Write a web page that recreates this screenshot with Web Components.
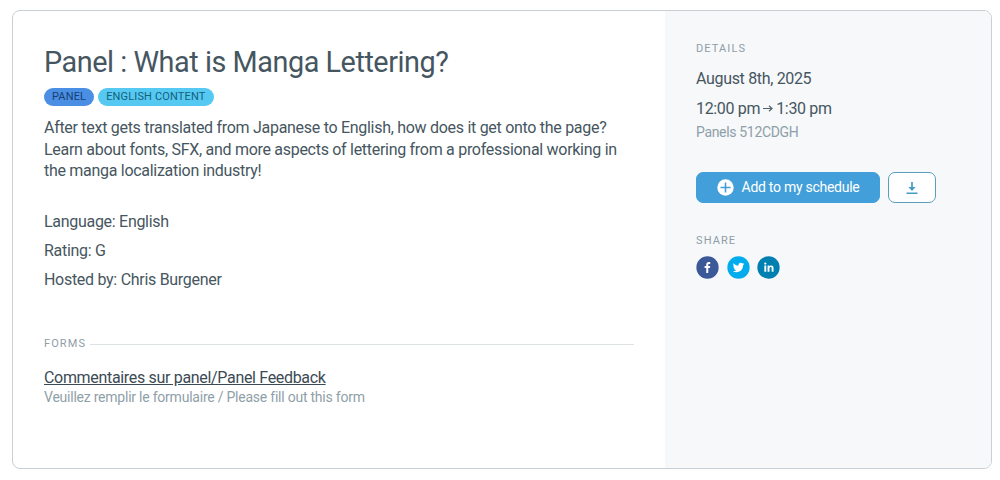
<!DOCTYPE html>
<html lang="en">
<head>
<meta charset="utf-8">
<title>Panel : What is Manga Lettering?</title>
<style>
  body {
    margin: 0;
    padding: 10px 8px 0 12px;
    background: #fff;
    font-family: Roboto, "Liberation Sans", sans-serif;
    font-size: 16px;
    letter-spacing: -.29px;
    color: #465660;
  }
</style>
</head>
<body>
<session-card>
  <session-heading>
    Panel : What is Manga Lettering?
    <session-tag slot="tags" style="--tag-bg: #4a8fe3; --tag-color: #173f75">PANEL</session-tag>
    <session-tag slot="tags" style="--tag-bg: #56c9f2; --tag-color: #14607c">ENGLISH CONTENT</session-tag>
  </session-heading>
  <session-description>
    After text gets translated from Japanese to English, how does it get onto the page? Learn about fonts, SFX, and more aspects of lettering from a professional working in the manga localization industry!
    <span slot="fact">Language: English</span>
    <span slot="fact">Rating: G</span>
    <span slot="fact">Hosted by: Chris Burgener</span>
  </session-description>
  <section-label line>FORMS</section-label>
  <form-link>
    Commentaires sur panel/Panel Feedback
    <span slot="note">Veuillez remplir le formulaire / Please fill out this form</span>
  </form-link>

  <section-label slot="aside">DETAILS</section-label>
  <session-time slot="aside" start="12:00 pm" end="1:30 pm">
    August 8th, 2025
    <span slot="place">Panels 512CDGH</span>
  </session-time>
  <schedule-actions slot="aside">Add to my schedule</schedule-actions>
  <section-label slot="aside">SHARE</section-label>
  <share-links slot="aside"></share-links>
</session-card>

<script>
class BaseElement extends HTMLElement {
    constructor() {
        super();
        this.shadowDOM = this.attachShadow({ mode: 'open' });
    }
    connectedCallback() {
        this.shadowDOM.innerHTML = this.render();
    }
}

class SessionCard extends BaseElement {
    render() {
        return `
        <style>
        :host {
            display: flex;
            box-sizing: border-box;
            height: 459px;
            border: 1px solid #c8d0d5;
            border-radius: 8px;
            overflow: hidden;
        }
        main {
            flex: 1;
            padding: 32px 31px 0;
        }
        aside {
            box-sizing: border-box;
            width: 326px;
            padding: 31px 31px 0;
            background: #f6f8fa;
        }
        </style>
        <main><slot></slot></main>
        <aside><slot name="aside"></slot></aside>`;
    }
}

class SessionHeading extends BaseElement {
    render() {
        return `
        <style>
        :host { display: block; }
        h1 {
            margin: 0;
            font-size: 28.8px;
            font-weight: 400;
            line-height: 38px;
            letter-spacing: -.45px;
            white-space: nowrap;
        }
        .tags {
            display: flex;
            gap: 4px;
            margin-top: 7px;
        }
        </style>
        <h1><slot></slot></h1>
        <div class="tags"><slot name="tags"></slot></div>`;
    }
}

class SessionTag extends BaseElement {
    render() {
        return `
        <style>
        :host {
            display: block;
            height: 18px;
            padding: 0 8px;
            border-radius: 9px;
            background: var(--tag-bg);
            color: var(--tag-color);
            font-size: 11px;
            line-height: 17px;
            letter-spacing: .15px;
            white-space: nowrap;
        }
        </style>
        <slot></slot>`;
    }
}

class SessionDescription extends BaseElement {
    render() {
        return `
        <style>
        :host { display: block; }
        p {
            margin: 11px 0 0;
            line-height: 21.6px;
        }
        .facts {
            display: flex;
            flex-direction: column;
            margin-top: 25px;
            line-height: 29.3px;
        }
        </style>
        <p><slot></slot></p>
        <div class="facts"><slot name="fact"></slot></div>`;
    }
}

class SectionLabel extends BaseElement {
    render() {
        return `
        <style>
        :host {
            display: flex;
            align-items: center;
            gap: 4px;
            color: #8f9da6;
            font-size: 11px;
            line-height: 14px;
            letter-spacing: 1.1px;
        }
        :host([line]) { margin-top: 42.5px; }
        :host([line])::after {
            content: "";
            flex: 1;
            height: 1px;
            background: #dce1e4;
        }
        </style>
        <slot></slot>`;
    }
}

class FormLink extends BaseElement {
    render() {
        return `
        <style>
        :host { display: block; margin-top: 16px; }
        a {
            display: block;
            color: #3b4a54;
            line-height: 22px;
            text-decoration: underline;
            letter-spacing: -.32px;
        }
        .note {
            margin-top: -1px;
            color: #8f9fa9;
            font-size: 14px;
            line-height: 18px;
            letter-spacing: -.23px;
        }
        </style>
        <a><slot></slot></a>
        <div class="note"><slot name="note"></slot></div>`;
    }
}

class SessionTime extends BaseElement {
    render() {
        return `
        <style>
        :host { display: block; margin-top: 8px; letter-spacing: -.33px; }
        .row {
            display: flex;
            align-items: center;
            gap: 3px;
            line-height: 29.5px;
        }
        .place {
            color: #8f9fa9;
            font-size: 14px;
            line-height: 18px;
        }
        </style>
        <div class="row"><slot></slot></div>
        <div class="row">
          <span>${this.getAttribute('start')}</span>
          <svg width="10" height="10" viewBox="0 0 10 10" fill="none" stroke="#53626c" stroke-width="1.2"><path d="M0 5.500h9M6 2.700l3 2.800-3 2.800"/></svg>
          <span>${this.getAttribute('end')}</span>
        </div>
        <div class="place"><slot name="place"></slot></div>`;
    }
}

class ScheduleActions extends BaseElement {
    render() {
        return `
        <style>
        :host {
            display: flex;
            gap: 8px;
            margin: 31px 0 31px;
        }
        button {
            display: flex;
            align-items: center;
            justify-content: center;
            box-sizing: border-box;
            height: 31px;
            margin: 0;
            padding: 0;
            border: 1px solid #429fd9;
            border-radius: 7px;
            font: inherit;
        }
        .add {
            width: 184px;
            gap: 8px;
            background: #429fd9;
            color: #fff;
            font-size: 14px;
            letter-spacing: -.27px;
        }
        .add span { padding-bottom: 2px; }
        .download {
            width: 48px;
            border-color: #5c9dbb;
            background: #fff;
        }
        </style>
        <button class="add">
          <svg width="17" height="17" viewBox="0 0 17 17"><circle cx="8.5" cy="8.5" r="8.200" fill="#fff"/><path d="M8.5 3.5v10M3.5 8.5h10" stroke="#429fd9" stroke-width="1.6"/></svg>
          <span><slot></slot></span>
        </button>
        <button class="download" aria-label="Download">
          <svg width="12" height="12" viewBox="0 0 12 12" fill="none" stroke="#429bc8"><path d="M6 0v8" stroke-width="1.7"/><path d="M2.500 5h7L6 9z" fill="#429bc8" stroke="none"/><path d="M.5 11.200h11" stroke-width="1.400"/></svg>
        </button>`;
    }
}

class ShareLinks extends BaseElement {
    render() {
        return `
        <style>
        :host {
            display: flex;
            gap: 7.700px;
            margin-top: 8px;
        }
        svg { display: block; }
        </style>
        <svg width="23" height="23" viewBox="0 0 64 64"><circle cx="32" cy="32" r="31" fill="#3b5998"/><path fill="#fff" d="M34.1 47V33.3h4.6l.7-5.3h-5.3v-3.4c0-1.5.4-2.6 2.6-2.6h2.8v-4.8c-.5-.1-2.2-.2-4.1-.2-4.1 0-6.9 2.5-6.9 7V28H24v5.3h4.5V47h5.6z"/></svg>
        <svg width="23" height="23" viewBox="0 0 64 64"><circle cx="32" cy="32" r="31" fill="#00aced"/><path fill="#fff" d="M48 22.1c-1.2.5-2.4.9-3.8 1 1.4-.8 2.4-2.1 2.9-3.6-1.3.8-2.7 1.3-4.2 1.6C41.7 19.8 40 19 38.2 19c-3.6 0-6.6 2.9-6.6 6.6 0 .5.1 1 .2 1.5-5.5-.3-10.3-2.9-13.5-6.9-.6 1-.9 2.1-.9 3.3 0 2.3 1.2 4.3 2.9 5.5-1.1 0-2.1-.3-3-.8v.1c0 3.2 2.3 5.8 5.3 6.4-.6.1-1.1.2-1.7.2-.4 0-.8 0-1.2-.1.8 2.6 3.3 4.5 6.1 4.6-2.2 1.8-5.1 2.8-8.2 2.8-.5 0-1.1 0-1.6-.1 2.9 1.9 6.4 2.9 10.1 2.9 12.1 0 18.7-10 18.7-18.7v-.8c1.3-1 2.4-2.1 3.2-3.4z"/></svg>
        <svg width="23" height="23" viewBox="0 0 64 64"><circle cx="32" cy="32" r="31" fill="#007fb1"/><path fill="#fff" d="M20.4 44h5.4V26.6h-5.4V44zm2.7-26a3.1 3.1 0 1 0 0 6.200 3.100 3.100 0 0 0 0-6.200zm11.500 11.200v-2.600h-5.200V44h5.400v-8.600c0-2.300.4-4.500 3.200-4.500 2.800 0 2.800 2.600 2.800 4.600V44H46v-9.500c0-4.700-1-8.300-6.500-8.300-2.600 0-4.400 1.500-5.100 2.800z"/></svg>`;
    }
}

customElements.define('session-card', SessionCard);
customElements.define('session-heading', SessionHeading);
customElements.define('session-tag', SessionTag);
customElements.define('session-description', SessionDescription);
customElements.define('section-label', SectionLabel);
customElements.define('form-link', FormLink);
customElements.define('session-time', SessionTime);
customElements.define('schedule-actions', ScheduleActions);
customElements.define('share-links', ShareLinks);
</script>
</body>
</html>
